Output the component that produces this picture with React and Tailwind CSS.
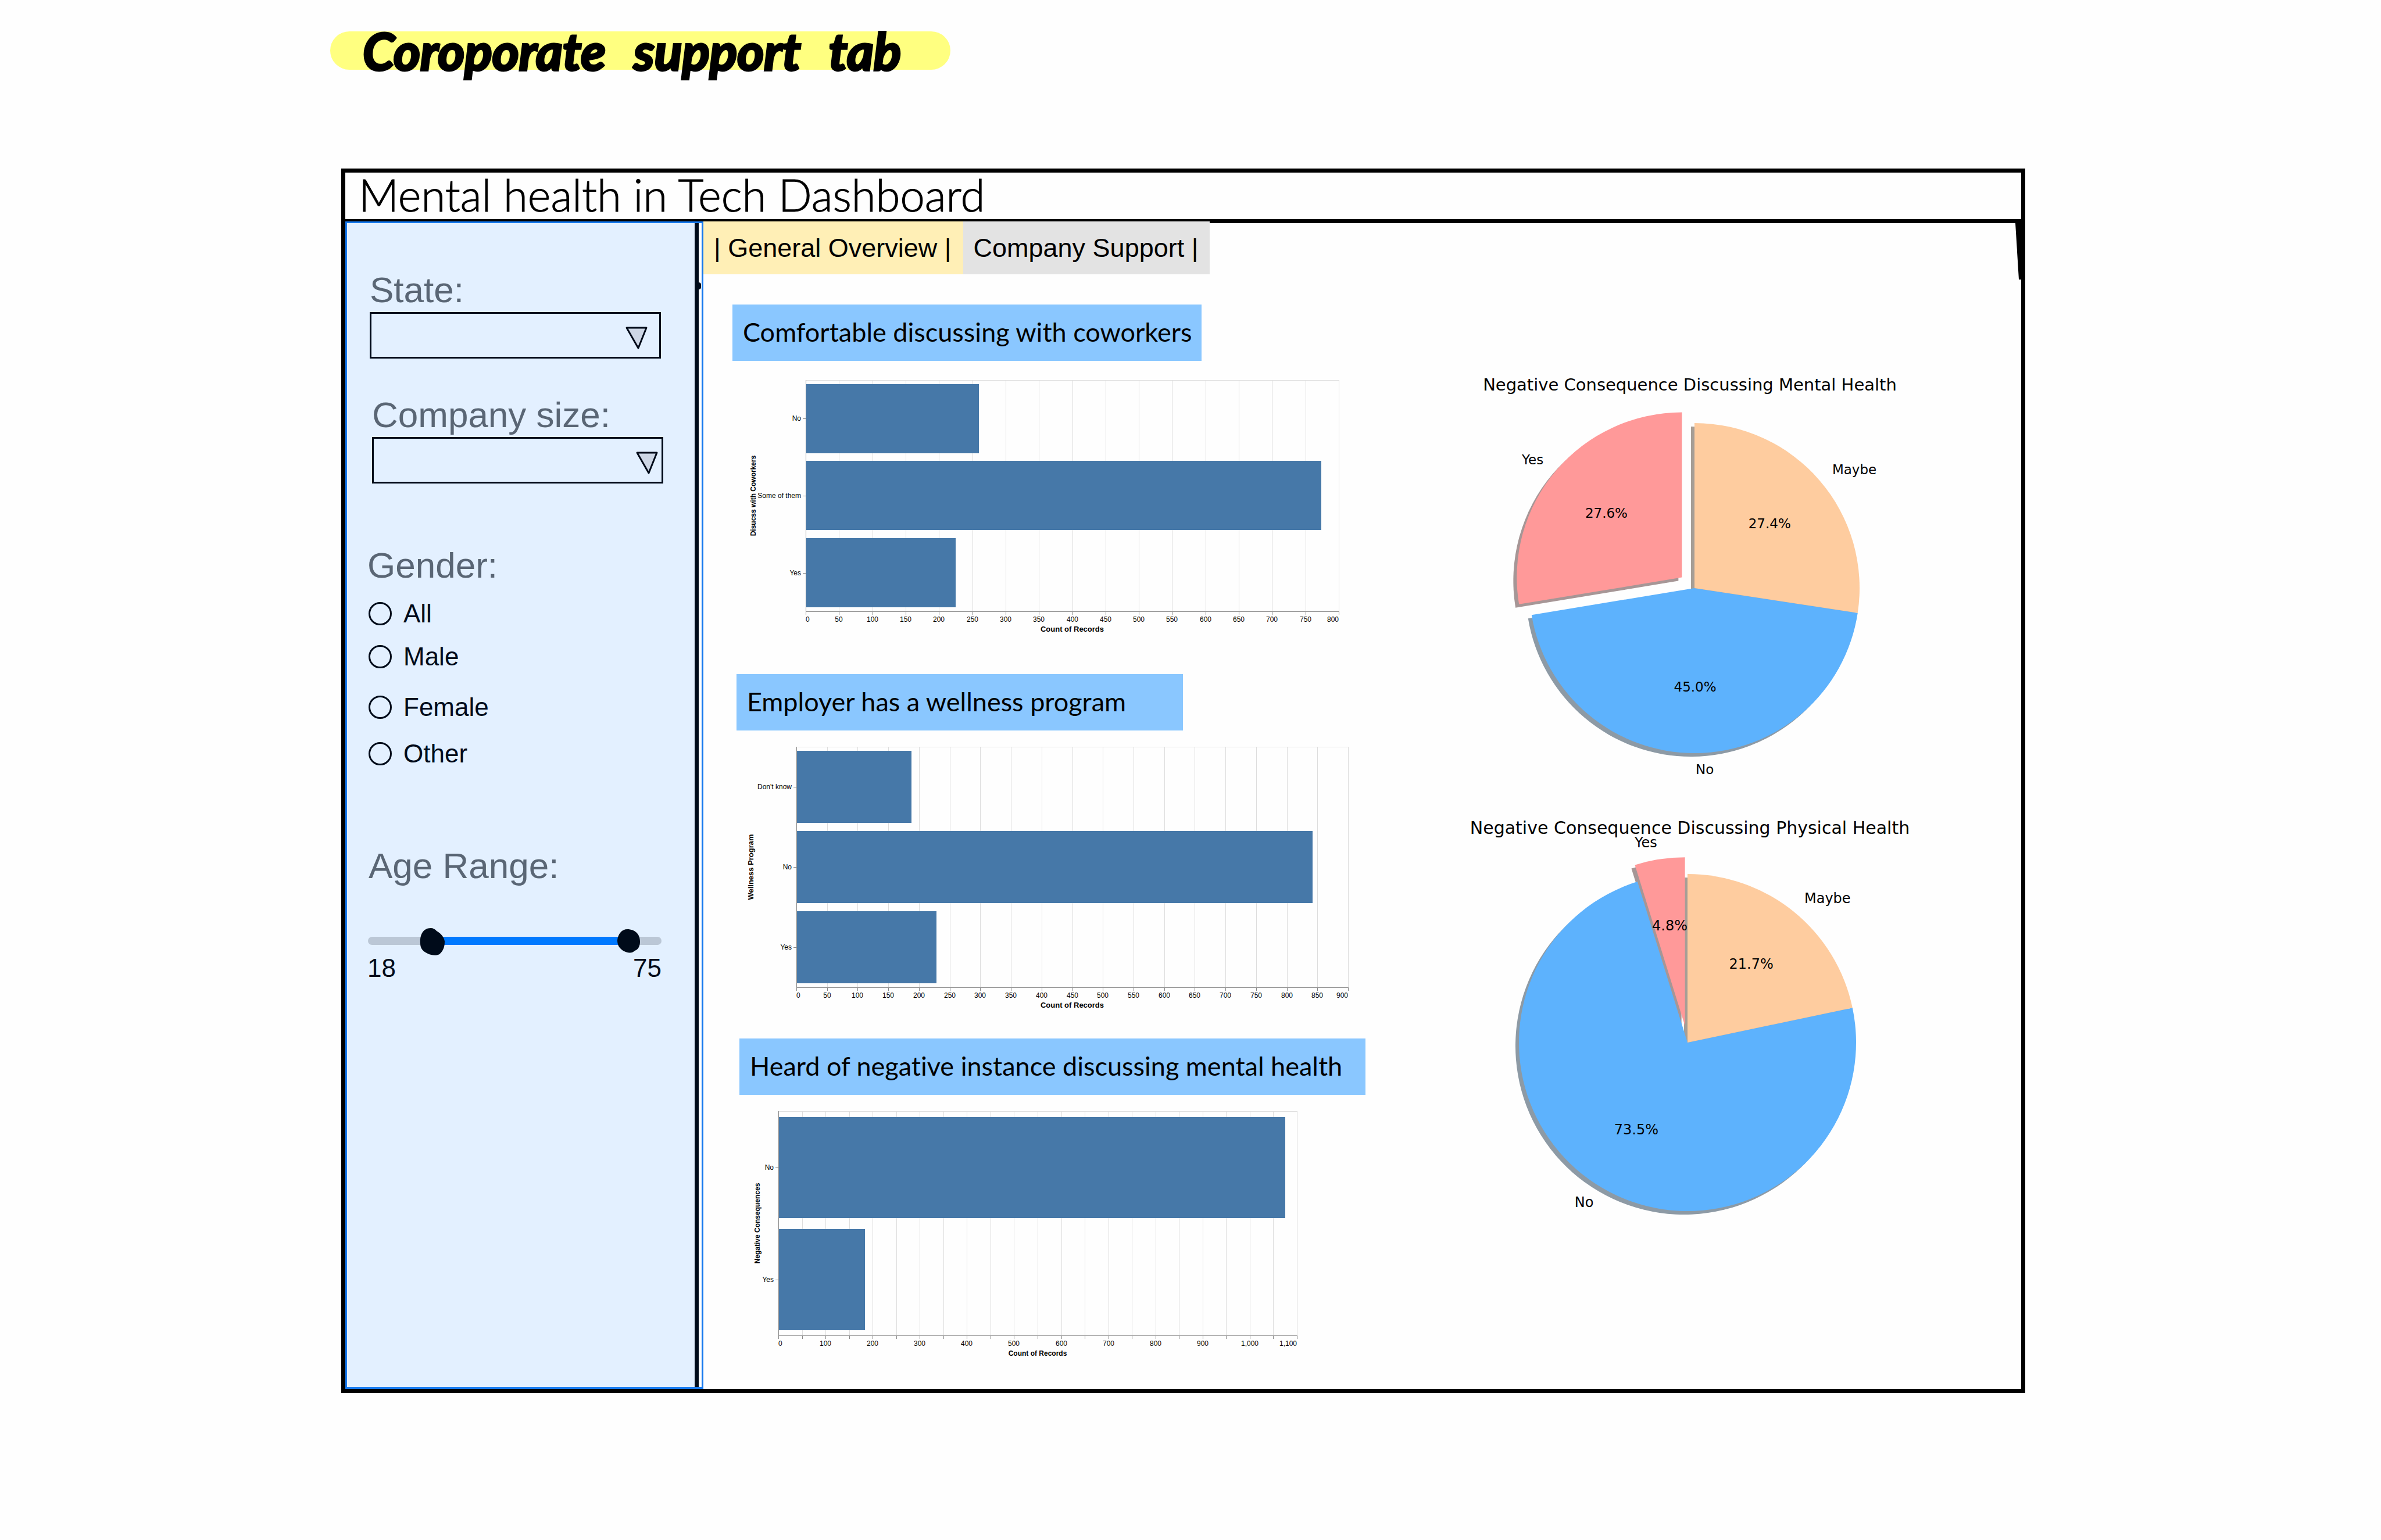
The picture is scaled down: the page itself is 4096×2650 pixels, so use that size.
const BAR_CHARTS = [
  {
    title: "Comfortable discussing with coworkers",
    axis: "Disucss with Coworkers",
    axisSize: 12,
    axisGap: 90,
    left: 126,
    width: 917,
    height: 398,
    max: 800,
    labelStep: 50,
    titleSize: 13,
    data: [["No", 260], ["Some of them", 774], ["Yes", 225]],
    section: "mb-16",
    heading: "w-[807px]",
    chart: "mt-[29px]",
  },
  {
    title: "Employer has a wellness program",
    axis: "Wellness Program",
    axisSize: 13,
    axisGap: 78,
    left: 103,
    width: 949,
    height: 414,
    max: 900,
    labelStep: 50,
    titleSize: 13,
    data: [["Don't know", 188], ["No", 842], ["Yes", 229]],
    section: "ml-[7px] mb-11",
    heading: "w-[768px]",
    chart: "mt-6",
  },
  {
    title: "Heard of negative instance discussing mental health",
    axis: "Negative Consequences",
    axisSize: 12,
    axisGap: 36,
    left: 67,
    width: 892,
    height: 386,
    max: 1100,
    labelStep: 100,
    titleSize: 12,
    data: [["No", 1075], ["Yes", 184]],
    section: "ml-3 mb-12",
    heading: "w-[1077px]",
    chart: "mt-6",
  },
];

function BarChart({ axis, axisSize, axisGap, left, width, height, max, labelStep, titleSize, data, title }) {
  const top = 4;
  const bottom = top + height;
  const step = height / data.length;
  const ticks = [];
  for (let v = 0; v <= max; v += 50) ticks.push(v);
  const x = (v) => Math.round(left + (v / max) * width);
  return (
    <svg
      viewBox={`0 0 1072 ${height + 48}`}
      className="block w-full max-w-[1072px] font-['Liberation_Sans',Arial,sans-serif]"
      role="img"
      aria-label={title}
      shapeRendering="crispEdges"
    >
      {ticks.map((v) => (
        <line key={v} x1={x(v)} x2={x(v)} y1={top} y2={bottom} stroke="#dddddd" />
      ))}
      <line x1={left} x2={left + width} y1={top} y2={top} stroke="#dddddd" />
      {data.map(([label, value], i) => (
        <g key={label}>
          <rect
            x={left}
            y={Math.round(top + i * step + step * 0.05)}
            width={x(value) - left}
            height={Math.round(step * 0.9)}
            fill="#4678a8"
          />
          <line x1={left - 5} x2={left} y1={Math.round(top + (i + 0.5) * step)} y2={Math.round(top + (i + 0.5) * step)} stroke="#888888" />
          <text x={left - 8} y={Math.round(top + (i + 0.5) * step) + 4} fontSize="12" textAnchor="end">
            {label}
          </text>
        </g>
      ))}
      <line x1={left} x2={left} y1={top} y2={bottom} stroke="#888888" />
      <line x1={left} x2={left + width} y1={bottom} y2={bottom} stroke="#888888" />
      {ticks.map((v) => (
        <g key={v}>
          <line x1={x(v)} x2={x(v)} y1={bottom} y2={bottom + 6} stroke="#888888" />
          {v % labelStep === 0 && (
            <text
              x={x(v)}
              y={bottom + 18}
              fontSize="12"
              textAnchor={v === 0 ? "start" : v === max ? "end" : "middle"}
            >
              {v.toLocaleString("en-US")}
            </text>
          )}
        </g>
      ))}
      <text x={left + width / 2} y={bottom + 35} fontSize={titleSize} fontWeight="bold" textAnchor="middle">
        Count of Records
      </text>
      <text
        transform={`translate(${left - axisGap + 4} ${top + height / 2}) rotate(-90)`}
        fontSize={axisSize}
        fontWeight="bold"
        textAnchor="middle"
      >
        {axis}
      </text>
    </svg>
  );
}

const PIES = [
  {
    title: "Negative Consequence Discussing Mental Health",
    titleY: 32,
    titleSize: 29,
    cx: 408,
    cy: 372,
    r: 284,
    size: 23,
    height: 705,
    slices: [
      { label: "Yes", pct: 27.6, fill: "#ff9999", shadow: "#a69696", explode: 0.1 },
      { label: "No", pct: 45.0, fill: "#5db2fd", shadow: "#8d9aa5", explode: 0 },
      { label: "Maybe", pct: 27.4, fill: "#fecc9f", shadow: "#a69e96", explode: 0 },
    ],
  },
  {
    title: "Negative Consequence Discussing Physical Health",
    titleY: 35,
    titleSize: 30,
    cx: 396,
    cy: 394,
    r: 290,
    size: 24,
    height: 700,
    slices: [
      { label: "Yes", pct: 4.8, fill: "#ff9999", shadow: "#a69696", explode: 0.1 },
      { label: "No", pct: 73.5, fill: "#5db2fd", shadow: "#8d9aa5", explode: 0 },
      { label: "Maybe", pct: 21.7, fill: "#fecc9f", shadow: "#a69e96", explode: 0 },
    ],
  },
];

function PieChart({ title, titleY, titleSize, cx, cy, r, size, height, slices }) {
  let turned = 0;
  const wedges = slices.map((s) => {
    const a0 = Math.PI / 2 + (turned / 100) * 2 * Math.PI;
    turned += s.pct;
    const a1 = Math.PI / 2 + (turned / 100) * 2 * Math.PI;
    const mid = (a0 + a1) / 2;
    const ox = cx + Math.cos(mid) * r * s.explode;
    const oy = cy - Math.sin(mid) * r * s.explode;
    const at = (a, k) => [ox + Math.cos(a) * r * k, oy - Math.sin(a) * r * k];
    const [x0, y0] = at(a0, 1);
    const [x1, y1] = at(a1, 1);
    const large = a1 - a0 > Math.PI ? 1 : 0;
    return {
      ...s,
      d: `M${ox} ${oy}L${x0} ${y0}A${r} ${r} 0 ${large} 0 ${x1} ${y1}Z`,
      inner: at(mid, 0.6),
      outer: at(mid, 1.1),
      anchor: Math.cos(mid) >= 0 ? "start" : "end",
    };
  });
  return (
    <svg
      viewBox={`0 0 800 ${height}`}
      className="block w-full max-w-[800px] font-['DejaVu_Sans',sans-serif]"
      role="img"
      aria-label={title}
    >
      {wedges.map((w) => (
        <path key={w.label} d={w.d} fill={w.shadow} transform="translate(-6 6)" />
      ))}
      {wedges.map((w) => (
        <path key={w.label} d={w.d} fill={w.fill} />
      ))}
      {wedges.map((w) => (
        <g key={w.label} fontSize={size}>
          <text x={w.inner[0]} y={w.inner[1] + 8} textAnchor="middle">
            {w.pct.toFixed(1)}%
          </text>
          <text x={w.outer[0]} y={w.outer[1] + 8} textAnchor={w.anchor}>
            {w.label}
          </text>
        </g>
      ))}
      <text x="400" y={titleY} fontSize={titleSize} textAnchor="middle">
        {title}
      </text>
    </svg>
  );
}

function SelectField({ id, label, className, arrow }) {
  return (
    <div className={className}>
      <label htmlFor={id} className="block text-[62px] leading-16 text-[#5a6675]">
        {label}
      </label>
      <div className="relative mt-1.5 w-[501px]">
        <select id={id} className="block h-20 w-full appearance-none border-[3px] border-[#000b1a] bg-transparent px-5 text-[44px]">
          <option></option>
        </select>
        <svg viewBox="0 0 40 42" className={arrow} aria-hidden="true">
          <path d="M3 3H37L23 38Z" fill="#cdd6e5" stroke="#000b1a" strokeWidth="3" strokeLinejoin="round" />
        </svg>
      </div>
    </div>
  );
}

const GENDERS = [
  ["All", "mt-[27px]"],
  ["Male", "mt-[26px]"],
  ["Female", "mt-[39px]"],
  ["Other", "mt-8"],
];

function Sidebar() {
  return (
    <aside className="relative -mt-[3px] flex w-[616px] shrink-0 border-[3px] border-[#1679ee] bg-white">
      <form className="flex-1 bg-[#e3f0ff] pt-[83px] pl-[39px] text-[#000b1a]">
        <SelectField id="state" label="State:" className="" arrow="pointer-events-none absolute top-6 right-[22px] w-10" />
        <SelectField id="company-size" label="Company size:" className="mt-[65px] ml-1" arrow="pointer-events-none absolute top-6 right-2 w-10" />

        <fieldset className="mt-[109px] -ml-1">
          <legend className="text-[62px] leading-16 text-[#5a6675]">Gender:</legend>
          {GENDERS.map(([name, gap]) => (
            <div key={name} className={gap}>
              <label className="flex h-12 items-center gap-5 pl-0.5 text-[44px] leading-12">
                <input type="radio" name="gender" value={name} className="size-10 appearance-none rounded-full border-[3px] border-[#000b1a] checked:bg-[#0079ff]" />
                {name}
              </label>
            </div>
          ))}
        </fieldset>

        <div className="mt-[137px] -ml-1 w-[506px]">
          <h2 className="pl-0.5 text-[62px] leading-16 text-[#5a6675]">Age Range:</h2>
          <div className="relative mt-[74px] h-12">
            <svg viewBox="0 0 506 48" className="block w-full" aria-hidden="true">
              <rect x="1" y="16" width="505" height="14" rx="7" fill="#bbc7d6" />
              <rect x="110" y="16" width="340" height="14" fill="#0079ff" />
              <path d="M109 1C113 1 117 3 119 6C126 10 132 16 133 24C133 34 130 41 124 46C119 49 110 48 104 45C96 41 91 37 91 27C90 14 95 1 109 1Z" fill="#000b1a" />
              <path d="M447 3C461 3 469 12 469 24C469 32 466 38 460 40C455 45 448 44 442 41C434 37 430 31 430 22C431 11 438 3 447 3Z" fill="#000b1a" />
            </svg>
            <input type="range" aria-label="Minimum age" min="18" max="75" defaultValue="30" className="absolute inset-y-0 left-0 w-1/2 opacity-0" />
            <input type="range" aria-label="Maximum age" min="18" max="75" defaultValue="70" className="absolute inset-y-0 right-0 w-1/2 opacity-0" />
          </div>
          <div className="-mt-0.5 flex justify-between text-[44px] leading-12">
            <span>18</span>
            <span>75</span>
          </div>
        </div>
      </form>
      <div className="w-[7px] bg-[#000b1a]" />
      <div className="w-[5px] pt-[102px]">
        <div className="h-3 w-1 rounded-r-full bg-[#000b1a]" />
      </div>
    </aside>
  );
}

export default function App() {
  return (
    <div className="min-h-screen bg-[#fefefe] pt-[54px] pr-[612px] pl-[568px] font-['Liberation_Sans',Arial,sans-serif] text-black">
      <h1 className="flex h-[66px] w-[1067px] items-center gap-12 rounded-[36px] bg-[#ffff80] pl-14 font-['Lato',sans-serif] text-[88px] leading-none font-bold italic [-webkit-text-stroke:4px_black]">
        <span>Coroporate</span>
        <span>support</span>
        <span>tab</span>
      </h1>

      <div className="mt-[170px] ml-[19px] border-[7px] border-black">
        <header className="flex h-[87px] items-center border-b-[7px] border-black pb-1 pl-[23px]">
          <p className="font-['Lato',sans-serif] text-[76px] leading-20 font-light whitespace-nowrap [-webkit-text-stroke:1px_black]">
            Mental health in Tech Dashboard
          </p>
        </header>

        <div className="relative flex">
          <svg viewBox="0 0 10 97" className="absolute top-0 right-0 h-[97px]" aria-hidden="true">
            <path d="M0 0H10V97H6Z" />
          </svg>
          <Sidebar />
          <main className="relative flex-1">
            <nav role="tablist" className="-mt-[3px] flex text-[45px] leading-12 whitespace-nowrap">
              <button role="tab" aria-selected="true" className="h-[91px] bg-[#ffefb6] pr-5 pl-[18px]">
                | General Overview |
              </button>
              <button role="tab" aria-selected="false" className="h-[91px] bg-[#e3e3e3] pr-5 pl-[18px]">
                Company Support |
              </button>
            </nav>

            <div className="flex">
              <div className="w-[1140px] pt-[52px] pl-[50px]">
                {BAR_CHARTS.map((c) => (
                  <section key={c.title} className={c.section}>
                    <div className={c.heading}>
                      <h2 className="flex h-[97px] items-center bg-[#8ac7ff] pb-1 pl-[18px] font-['Lato',sans-serif] text-[45px] leading-12 whitespace-nowrap [font-variant-ligatures:none]">
                        {c.title}
                      </h2>
                    </div>
                    <div className={c.chart}>
                      <BarChart {...c} />
                    </div>
                  </section>
                ))}
              </div>
              <div className="flex flex-1 flex-col items-center gap-[55px] pt-[168px] pr-3.5">
                {PIES.map((p) => (
                  <PieChart key={p.title} {...p} />
                ))}
              </div>
            </div>
          </main>
        </div>
      </div>
    </div>
  );
}
